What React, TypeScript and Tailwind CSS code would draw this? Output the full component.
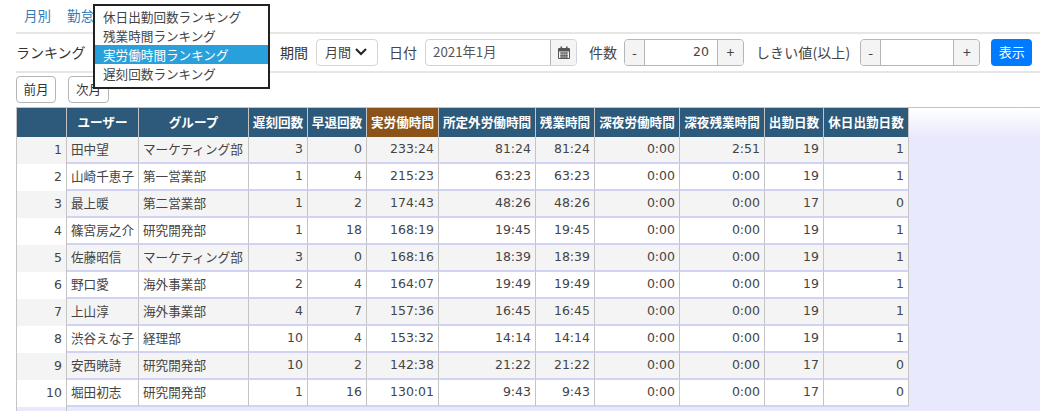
const cols = [50, 72, 110, 59, 59, 72, 97, 59, 85, 85, 59, 85];
const heads = ["", "ユーザー", "グループ", "遅刻回数", "早退回数", "実労働時間", "所定外労働時間", "残業時間", "深夜労働時間", "深夜残業時間", "出勤日数", "休日出勤日数"];
const rows: (string | number)[][] = [
  [1, "田中望", "マーケティング部", 3, 0, "233:24", "81:24", "81:24", "0:00", "2:51", 19, 1],
  [2, "山崎千恵子", "第一営業部", 1, 4, "215:23", "63:23", "63:23", "0:00", "0:00", 19, 1],
  [3, "最上暖", "第二営業部", 1, 2, "174:43", "48:26", "48:26", "0:00", "0:00", 17, 0],
  [4, "篠宮房之介", "研究開発部", 1, 18, "168:19", "19:45", "19:45", "0:00", "0:00", 19, 1],
  [5, "佐藤昭信", "マーケティング部", 3, 0, "168:16", "18:39", "18:39", "0:00", "0:00", 19, 1],
  [6, "野口愛", "海外事業部", 2, 4, "164:07", "19:49", "19:49", "0:00", "0:00", 19, 1],
  [7, "上山淳", "海外事業部", 4, 7, "157:36", "16:45", "16:45", "0:00", "0:00", 19, 1],
  [8, "渋谷えな子", "経理部", 10, 4, "153:32", "14:14", "14:14", "0:00", "0:00", 19, 1],
  [9, "安西暁詩", "研究開発部", 10, 2, "142:38", "21:22", "21:22", "0:00", "0:00", 17, 0],
  [10, "堀田初志", "研究開発部", 1, 16, "130:01", "9:43", "9:43", "0:00", "0:00", 17, 0],
];
const menu = ["休日出勤回数ランキング", "残業時間ランキング", "実労働時間ランキング", "遅刻回数ランキング"];

function Stepper({ w, value }: { w: number; value: string }) {
  return (
    <div className="flex h-[27px] rounded border border-[#b5b5b5] overflow-hidden text-[#444]" style={{ width: w }}>
      <div className="w-[20px] bg-[#f4f4f4] border-r border-[#b5b5b5] flex items-center justify-center">-</div>
      <div className="flex-1 flex items-center justify-end pr-[8px] text-[12.5px] font-['DejaVu_Sans',sans-serif]">{value}</div>
      <div className="w-[26px] bg-[#f4f4f4] border-l border-[#b5b5b5] flex items-center justify-center">+</div>
    </div>
  );
}

function Calendar() {
  return (
    <svg width="12" height="13" viewBox="0 0 12 13" fill="#555">
      <rect x="2.5" y="0.5" width="1.6" height="3" />
      <rect x="8" y="0.5" width="1.6" height="3" />
      <path d="M1 2h10a1 1 0 0 1 1 1v9a1 1 0 0 1-1 1H1a1 1 0 0 1-1-1V3a1 1 0 0 1 1-1zm0 3.5V12h10V5.5H1z" />
      <path d="M2 6.5h8v1H2zM2 8.7h8v1H2zM2 10.6h8v1H2zM3.6 6h.8v6h-.8zM5.7 6h.8v6h-.8zM7.8 6h.8v6h-.8z" />
    </svg>
  );
}

export default function App() {
  return (
    <div className="relative w-[1040px] h-[411px] overflow-hidden bg-white text-[14px] text-[#333] font-['Noto_Sans_CJK_JP',sans-serif]">
      <div className="ml-[16px] h-[34px] border-b-2 border-[#e6e6e6] flex items-center gap-[16px] pl-[8px] pb-[1px] text-[#337ab7] text-[13.5px]">
        <span>月別</span>
        <span>勤怠</span>
      </div>
      <div className="ml-[16px] h-[39px] border-b-2 border-[#e6e6e6] flex items-center pb-[1px] text-[#444]">
        <span className="w-[72px] text-[#333]">ランキング</span>
        <span className="ml-[192px] text-[#333]">期間</span>
        <div className="ml-[8px] w-[62px] h-[27px] rounded border border-[#d5d5d5] flex items-center pl-[8px] gap-[4px]">
          <span className="text-[13px]">月間</span>
          <svg width="12" height="8" viewBox="0 0 12 8" fill="none" stroke="#222" strokeWidth="2"><path d="M1 1l5 5 5-5" /></svg>
        </div>
        <span className="ml-[11px]">日付</span>
        <div className="ml-[8px] w-[152px] h-[27px] rounded border border-[#ced4da] flex items-center overflow-hidden">
          <span className="flex-1 pl-[7px] text-[13.3px] text-[#555]">2021年1月</span>
          <div className="w-[26px] h-full bg-[#f4f4f4] border-l border-[#b5b5b5] flex items-center justify-center"><Calendar /></div>
        </div>
        <span className="ml-[12px]">件数</span>
        <div className="ml-[7px]"><Stepper w={120} value="20" /></div>
        <span className="ml-[12px] tracking-[0.1px]">しきい値(以上)</span>
        <div className="ml-[10px]"><Stepper w={120} value="" /></div>
        <div className="ml-[11px] w-[41px] h-[27px] rounded bg-[#007bff] text-white text-[13px] flex items-center justify-center">表示</div>
      </div>
      <div className="ml-[16px] h-[34px] flex items-center gap-[12px] text-[12.6px] pb-[1px]">
        <div className="w-[40px] h-[27px] rounded border border-[#b5b5b5] flex items-center justify-center">前月</div>
        <div className="w-[41px] h-[27px] rounded border border-[#b5b5b5] flex items-center justify-center">次月</div>
      </div>
      <div className="ml-[16px] h-[304px] border-t border-l border-[#c4c4c4] bg-[#e9e9fd]">
        <div className="flex h-[29px] bg-gradient-to-b from-white to-[#e9e9fd]">
          {heads.map((h, i) => (
            <div
              key={i}
              style={{ width: cols[i] }}
              className={`shrink-0 border-r border-[#c4c4c4] flex items-center justify-center whitespace-nowrap overflow-hidden text-white font-bold text-[12.6px] ${h === "実労働時間" ? "bg-[#8b5219]" : "bg-[#2d5a7b]"}`}
            >
              {h}
            </div>
          ))}
        </div>
        {rows.map((r, ri) => (
          <div key={ri} className="flex h-[27px]">
            {r.map((c, i) => (
              <div
                key={i}
                style={{ width: cols[i] }}
                className={`shrink-0 flex items-center whitespace-nowrap overflow-hidden text-[#444] border-r border-[#c4c4c4] ${i > 0 ? "border-b-2 border-b-[#d2d2f5]" : ""} ${ri % 2 === 0 ? "bg-[#f4f4f4]" : "bg-white"} ${i === 1 || i === 2 ? "justify-start pl-[4px] text-[12.6px] text-[#333]" : "justify-end pr-[4px] font-['DejaVu_Sans',sans-serif] text-[12.5px]"}`}
              >
                {c}
              </div>
            ))}
          </div>
        ))}
        <div className="w-[50px] h-[5px] border-r border-[#c4c4c4]" />
      </div>
      <div className="absolute left-[93px] top-[4px] w-[177px] h-[85px] border-2 border-[#222] bg-white text-[12.6px] leading-[19px] pt-[1px] pb-[3px] text-[#444]">
        {menu.map((m, i) => (
          <div key={m} className={`pl-[8px] h-[19px] whitespace-nowrap ${i === 2 ? "bg-[#28a0dc] text-white" : ""}`}>{m}</div>
        ))}
      </div>
    </div>
  );
}
